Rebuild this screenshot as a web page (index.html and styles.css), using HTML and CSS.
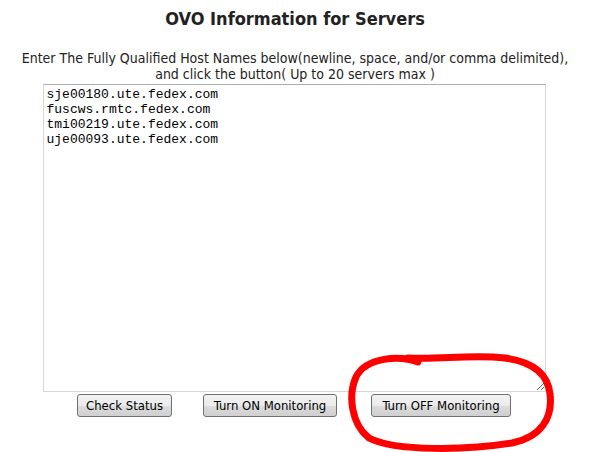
FILE: index.html
```html
<!DOCTYPE html>
<html>
<head>
<meta charset="utf-8">
<link rel="stylesheet" href="styles.css">
</head>
<body>
<div class="page">
  <h1 class="title">OVO Information for Servers</h1>
  <p class="intro">Enter The Fully Qualified Host Names below(newline, space, and/or comma delimited),<br>and click the button( Up to 20 servers max )</p>
  <textarea class="hosts">sje00180.ute.fedex.com
fuscws.rmtc.fedex.com
tmi00219.ute.fedex.com
uje00093.ute.fedex.com</textarea>
  <div class="actions">
    <button class="btn btn-check">Check Status</button>
    <button class="btn btn-on">Turn ON Monitoring</button>
    <button class="btn btn-off">Turn OFF Monitoring</button>
  </div>
  <svg class="scribble" width="590" height="452" viewBox="0 0 590 452">
    <path d="M 418 362 C 400 355, 366 357, 356 377 C 348 395, 351 424, 369 438 C 395 452, 470 450, 512 443 C 541 437, 553 418, 550 394 C 548 374, 534 362, 505 358 C 470 354, 440 360, 408 358" fill="none" stroke="#ff0000" stroke-width="7" stroke-linecap="round" stroke-linejoin="round"/>
  </svg>
</div>
</body>
</html>
```

FILE: styles.css
```css
html, body {
  margin: 0;
  padding: 0;
  background: #ffffff;
}
.page {
  position: relative;
  width: 590px;
  height: 452px;
  overflow: hidden;
  display: flex;
  flex-direction: column;
  align-items: center;
  font-family: "DejaVu Sans Condensed", "DejaVu Sans", sans-serif;
  color: #222222;
}
.title {
  margin: 8px 0 0 0;
  font-size: 18px;
  font-weight: bold;
  line-height: 22px;
  color: #222222;
}
.intro {
  margin: 20px 0 0 0;
  font-size: 14px;
  line-height: 16px;
  text-align: center;
  white-space: nowrap;
}
.hosts {
  box-sizing: border-box;
  width: 503px;
  height: 308px;
  margin: 2px 0 0 -2px;
  padding: 2px 3px;
  border: 1px solid #d6d6d9;
  border-top-color: #abadb3;
  font-family: "Courier New", "Liberation Mono", monospace;
  font-size: 13px;
  line-height: 15px;
  color: #000000;
  resize: both;
  outline: none;
}
.actions {
  display: flex;
  gap: 31px;
  margin-top: 2px;
  margin-left: -2px;
}
.btn {
  box-sizing: border-box;
  height: 23px;
  padding: 0;
  white-space: nowrap;
  border: 1px solid #707070;
  border-radius: 3px;
  background: linear-gradient(#f2f2f2 0%, #ebebeb 50%, #dddddd 51%, #cfcfcf 100%);
  font-family: "DejaVu Sans Condensed", "DejaVu Sans", sans-serif;
  font-size: 13px;
  color: #000000;
}
.btn-check { width: 95px; }
.btn-on { width: 134px; }
.btn-off { width: 140px; margin-left: 3px; }
.scribble {
  position: absolute;
  left: 0;
  top: 0;
  pointer-events: none;
}
```
